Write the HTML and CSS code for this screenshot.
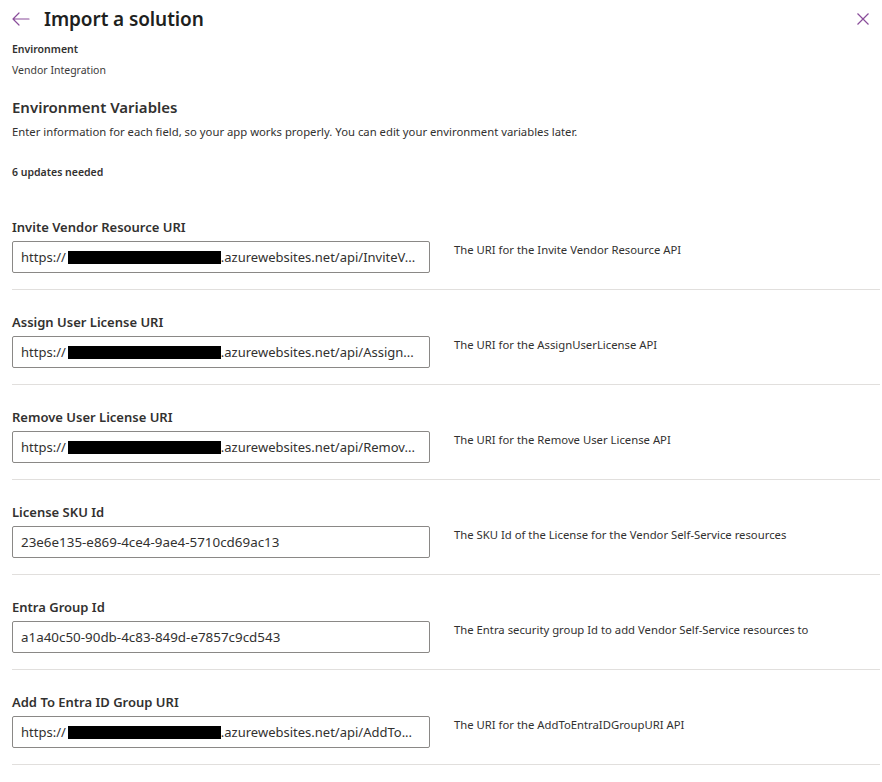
FILE: index.html
```html
<!DOCTYPE html>
<html lang="en">
<head>
<meta charset="utf-8">
<title>Import a solution</title>
<link rel="stylesheet" href="styles.css">
</head>
<body>
<div class="page">
  <header class="header">
    <button class="icon-btn back" aria-label="Back">
      <svg width="18" height="14" viewBox="0 0 18 14"><path d="M7 1 L1 7 L7 13 M1 7 H17" fill="none" stroke="currentColor" stroke-width="1.2" stroke-linecap="round" stroke-linejoin="round"/></svg>
    </button>
    <h1 class="title">Import a solution</h1>
    <button class="icon-btn close" aria-label="Close">
      <svg width="12" height="12" viewBox="0 0 12 12"><path d="M0.5 0.5 L11.5 11.5 M11.5 0.5 L0.5 11.5" fill="none" stroke="currentColor" stroke-width="1.2"/></svg>
    </button>
  </header>

  <div class="env">
    <div class="env-label">Environment</div>
    <div class="env-value">Vendor Integration</div>
  </div>

  <section class="intro">
    <h2 class="section-title">Environment Variables</h2>
    <p class="section-desc">Enter information for each field, so your app works properly. You can edit your environment variables later.</p>
    <div class="updates">6 updates needed</div>
  </section>

  <div class="vars">
    <div class="var">
      <div class="var-label">Invite Vendor Resource URI</div>
      <div class="var-row">
        <div class="field">https://<span class="redact"></span>.azurewebsites.net/api/InviteV...</div>
        <div class="var-desc">The URI for the Invite Vendor Resource API</div>
      </div>
    </div>
    <div class="var">
      <div class="var-label">Assign User License URI</div>
      <div class="var-row">
        <div class="field">https://<span class="redact"></span>.azurewebsites.net/api/Assign...</div>
        <div class="var-desc">The URI for the AssignUserLicense API</div>
      </div>
    </div>
    <div class="var">
      <div class="var-label">Remove User License URI</div>
      <div class="var-row">
        <div class="field">https://<span class="redact"></span>.azurewebsites.net/api/Remov...</div>
        <div class="var-desc">The URI for the Remove User License API</div>
      </div>
    </div>
    <div class="var">
      <div class="var-label">License SKU Id</div>
      <div class="var-row">
        <div class="field field-id">23e6e135-e869-4ce4-9ae4-5710cd69ac13</div>
        <div class="var-desc">The SKU Id of the License for the Vendor Self-Service resources</div>
      </div>
    </div>
    <div class="var">
      <div class="var-label">Entra Group Id</div>
      <div class="var-row">
        <div class="field field-id">a1a40c50-90db-4c83-849d-e7857c9cd543</div>
        <div class="var-desc">The Entra security group Id to add Vendor Self-Service resources to</div>
      </div>
    </div>
    <div class="var">
      <div class="var-label">Add To Entra ID Group URI</div>
      <div class="var-row">
        <div class="field">https://<span class="redact"></span>.azurewebsites.net/api/AddTo...</div>
        <div class="var-desc">The URI for the AddToEntraIDGroupURI API</div>
      </div>
    </div>
  </div>
</div>
</body>
</html>
```

FILE: styles.css
```css
* { box-sizing: border-box; }
html, body { margin: 0; padding: 0; background: #ffffff; }
body {
  font-family: "Noto Sans", "Open Sans", sans-serif;
  color: #323130;
}
.page {
  padding: 0 2px 0 12px;
}
.header {
  display: flex;
  align-items: center;
  height: 38px;
}
.icon-btn {
  border: 0;
  background: none;
  padding: 0;
  margin: 0;
  color: #8a4d9a;
  display: flex;
  align-items: center;
  cursor: pointer;
}
.back { width: 32px; }
.close { margin-left: auto; margin-right: 11px; }
.title {
  margin: 0;
  font-size: 19px;
  font-weight: 600;
  color: #201f1e;
  letter-spacing: -0.1px;
}
.env { padding-top: 2px; }
.env-label {
  font-size: 10.5px;
  font-weight: 600;
  line-height: 18px;
}
.env-value {
  font-size: 10.5px;
  line-height: 18px;
  margin-top: 3px;
  color: #3b3a39;
}
.intro { padding-top: 17px; }
.section-title {
  margin: 0;
  font-size: 15px;
  font-weight: 600;
  line-height: 22px;
}
.section-desc {
  margin: 6px 0 0;
  font-size: 11.3px;
  line-height: 16px;
}
.updates {
  margin-top: 24px;
  font-size: 10.5px;
  font-weight: 600;
  line-height: 16px;
}
.vars { margin-top: 37px; }
.var {
  border-bottom: 1px solid #e1dfdd;
  padding-bottom: 16px;
}
.var + .var { padding-top: 22px; }
.var-label {
  font-size: 13px;
  font-weight: 600;
  line-height: 20px;
  margin-bottom: 4px;
}
.var-row {
  display: flex;
  align-items: flex-start;
  gap: 24px;
}
.field {
  width: 418px;
  height: 32px;
  border: 1px solid #8a8886;
  border-radius: 2px;
  padding: 0 8px;
  font-size: 13px;
  line-height: 30px;
  white-space: nowrap;
  overflow: hidden;
  color: #323130;
}
.field-id { font-size: 13.4px; }
.redact {
  display: inline-block;
  width: 153px;
  height: 13px;
  background: #000;
  vertical-align: -2px;
  margin-left: 2px;
}
.var-desc {
  font-size: 11.3px;
  line-height: 16px;
  padding-top: 1px;
}
```
